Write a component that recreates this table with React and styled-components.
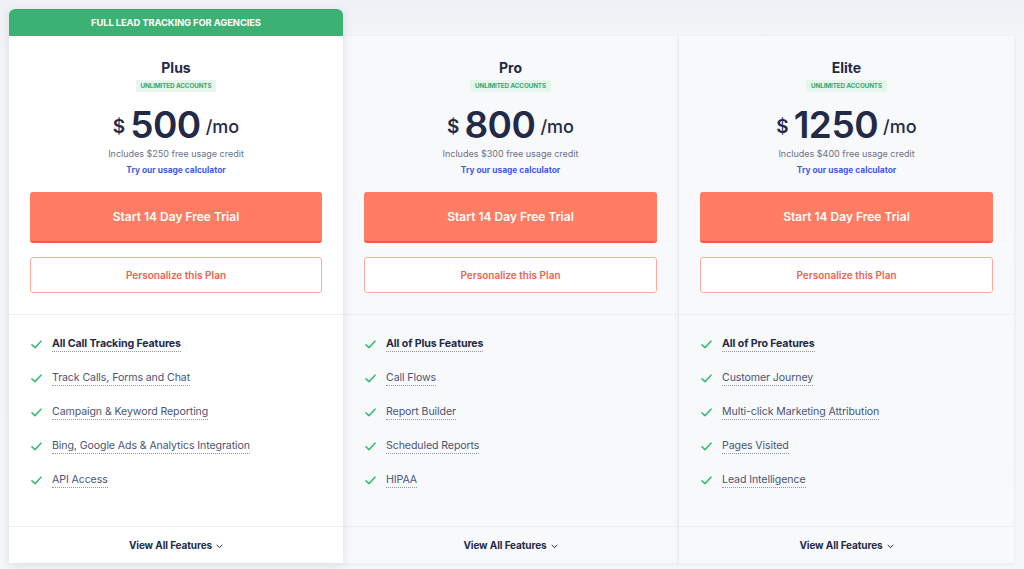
import React from "react";
import styled, { createGlobalStyle } from "styled-components";

const Global = createGlobalStyle`
  html, body { margin: 0; padding: 0; }
  body {
    background: #eef1f5;
    font-family: Inter, "Noto Sans", "Liberation Sans", sans-serif;
    -webkit-font-smoothing: antialiased;
  }
`;

const Page = styled.div`
  width: 1024px;
  height: 569px;
  box-sizing: border-box;
  padding: 9px 10px 0 9px;
  background: linear-gradient(#eef1f5, #f3f5f8 40px, #f5f7fa);
  overflow: hidden;
`;

const Row = styled.div`
  display: grid;
  grid-template-columns: 334px 335px 336px;
  align-items: end;
`;

const Column = styled.div`
  display: flex;
  flex-direction: column;
  position: relative;
  z-index: ${(p) => (p.$featured ? 2 : 1)};
  box-shadow: ${(p) =>
    p.$featured
      ? "0 2px 10px rgba(40, 50, 80, 0.14)"
      : "0 1px 4px rgba(40, 50, 80, 0.08)"};
  border-radius: ${(p) => (p.$featured ? "6px 6px 0 0" : "0")};
`;

const Banner = styled.div`
  height: 27px;
  background: #3bb273;
  border-radius: 6px 6px 0 0;
  color: #fff;
  font-size: 9.4px;
  font-weight: 700;
  letter-spacing: -0.1px;
  display: flex;
  align-items: center;
  justify-content: center;
  text-transform: uppercase;
`;

const Card = styled.div`
  height: 527px;
  display: flex;
  flex-direction: column;
  background: ${(p) => (p.$featured ? "#ffffff" : "#f8f9fb")};
  border-left: ${(p) => (p.$divider ? "1px solid #e6e9ef" : "none")};
  box-sizing: border-box;
`;

const Head = styled.div`
  display: flex;
  flex-direction: column;
  align-items: center;
  padding: 22px 21px 21px 21px;
  border-bottom: 1px solid #eceef3;
`;

const PlanName = styled.div`
  font-size: 14px;
  line-height: 20px;
  font-weight: 700;
  color: #232a48;
`;

const Badge = styled.div`
  margin-top: 2px;
  height: 12px;
  padding: 0 5px;
  background: #e6f6ec;
  color: #3aa56b;
  font-size: 6.3px;
  font-weight: 700;
  display: flex;
  align-items: center;
  letter-spacing: -0.1px;
`;

const PriceRow = styled.div`
  margin-top: 11px;
  height: 44px;
  display: flex;
  align-items: center;
  justify-content: center;
  color: #232a48;
`;

const Currency = styled.span`
  font-size: 19px;
  font-weight: 600;
  margin-right: 5px;
  margin-top: 2px;
`;

const Amount = styled.span`
  font-size: 37px;
  font-weight: 600;
  letter-spacing: -0.5px;
  line-height: 44px;
`;

const Per = styled.span`
  font-size: 18px;
  font-weight: 500;
  margin-left: 5px;
  margin-top: 3px;
`;

const Credit = styled.div`
  font-size: 9px;
  line-height: 14px;
  color: #6a7188;
`;

const Calc = styled.a`
  margin-top: 2px;
  font-size: 8.4px;
  line-height: 14px;
  font-weight: 700;
  color: #3d5ce0;
  text-decoration: none;
`;

const Primary = styled.button`
  margin-top: 15px;
  width: 100%;
  height: 51px;
  border: none;
  border-bottom: 2px solid #e8604a;
  border-radius: 3px;
  background: #ff7c64;
  color: #fff;
  font-family: inherit;
  font-size: 12px;
  font-weight: 600;
  cursor: pointer;
`;

const Secondary = styled.button`
  margin-top: 14px;
  width: 100%;
  height: 36px;
  border: 1px solid #ffaaa0;
  border-radius: 3px;
  background: #fff;
  color: #f0614f;
  font-family: inherit;
  font-size: 10px;
  font-weight: 600;
  cursor: pointer;
`;

const Features = styled.ul`
  list-style: none;
  margin: 0;
  padding: 19px 22px 0 22px;
  flex: 1;
  display: flex;
  flex-direction: column;
  gap: 14px;
`;

const Feature = styled.li`
  display: flex;
  align-items: center;
  height: 20px;
  gap: 10px;
`;

const FeatureText = styled.span`
  font-size: 10.6px;
  line-height: 13px;
  font-weight: ${(p) => (p.$bold ? 700 : 400)};
  color: ${(p) => (p.$bold ? "#232a48" : "#4b5475")};
  border-bottom: 1px dotted #8f97ad;
  padding-bottom: 1px;
  letter-spacing: -0.1px;
`;

const Footer = styled.div`
  height: 36px;
  border-top: 1px solid #eceef3;
  display: flex;
  align-items: center;
  justify-content: center;
  gap: 4px;
  font-size: 10px;
  font-weight: 700;
  color: #232a48;
  letter-spacing: -0.1px;
`;

const Check = () => (
  <svg width="11" height="9" viewBox="0 0 11 9" fill="none">
    <path d="M1 4.8 L4 7.6 L10 1.2" stroke="#3cbd77" strokeWidth="1.6" strokeLinecap="round" strokeLinejoin="round" />
  </svg>
);

const Chevron = () => (
  <svg width="7" height="5" viewBox="0 0 7 5" fill="none" style={{ marginTop: 2 }}>
    <path d="M1 1.2 L3.5 3.6 L6 1.2" stroke="#232a48" strokeWidth="1" strokeLinecap="round" strokeLinejoin="round" />
  </svg>
);

const plans = [
  {
    name: "Plus",
    price: "500",
    credit: "$250",
    featured: true,
    features: [
      "All Call Tracking Features",
      "Track Calls, Forms and Chat",
      "Campaign & Keyword Reporting",
      "Bing, Google Ads & Analytics Integration",
      "API Access",
    ],
  },
  {
    name: "Pro",
    price: "800",
    credit: "$300",
    features: ["All of Plus Features", "Call Flows", "Report Builder", "Scheduled Reports", "HIPAA"],
  },
  {
    name: "Elite",
    price: "1250",
    credit: "$400",
    features: [
      "All of Pro Features",
      "Customer Journey",
      "Multi-click Marketing Attribution",
      "Pages Visited",
      "Lead Intelligence",
    ],
  },
];

export default function App() {
  return (
    <>
      <Global />
      <Page>
        <Row>
          {plans.map((p, i) => (
            <Column key={p.name} $featured={p.featured}>
              {p.featured && <Banner>Full Lead Tracking for Agencies</Banner>}
              <Card $featured={p.featured} $divider={i === 2}>
                <Head>
                  <PlanName>{p.name}</PlanName>
                  <Badge>UNLIMITED ACCOUNTS</Badge>
                  <PriceRow>
                    <Currency>$</Currency>
                    <Amount>{p.price}</Amount>
                    <Per>/mo</Per>
                  </PriceRow>
                  <Credit>Includes {p.credit} free usage credit</Credit>
                  <Calc href="#">Try our usage calculator</Calc>
                  <Primary>Start 14 Day Free Trial</Primary>
                  <Secondary>Personalize this Plan</Secondary>
                </Head>
                <Features>
                  {p.features.map((f, j) => (
                    <Feature key={f}>
                      <Check />
                      <FeatureText $bold={j === 0}>{f}</FeatureText>
                    </Feature>
                  ))}
                </Features>
                <Footer>
                  View All Features <Chevron />
                </Footer>
              </Card>
            </Column>
          ))}
        </Row>
      </Page>
    </>
  );
}
